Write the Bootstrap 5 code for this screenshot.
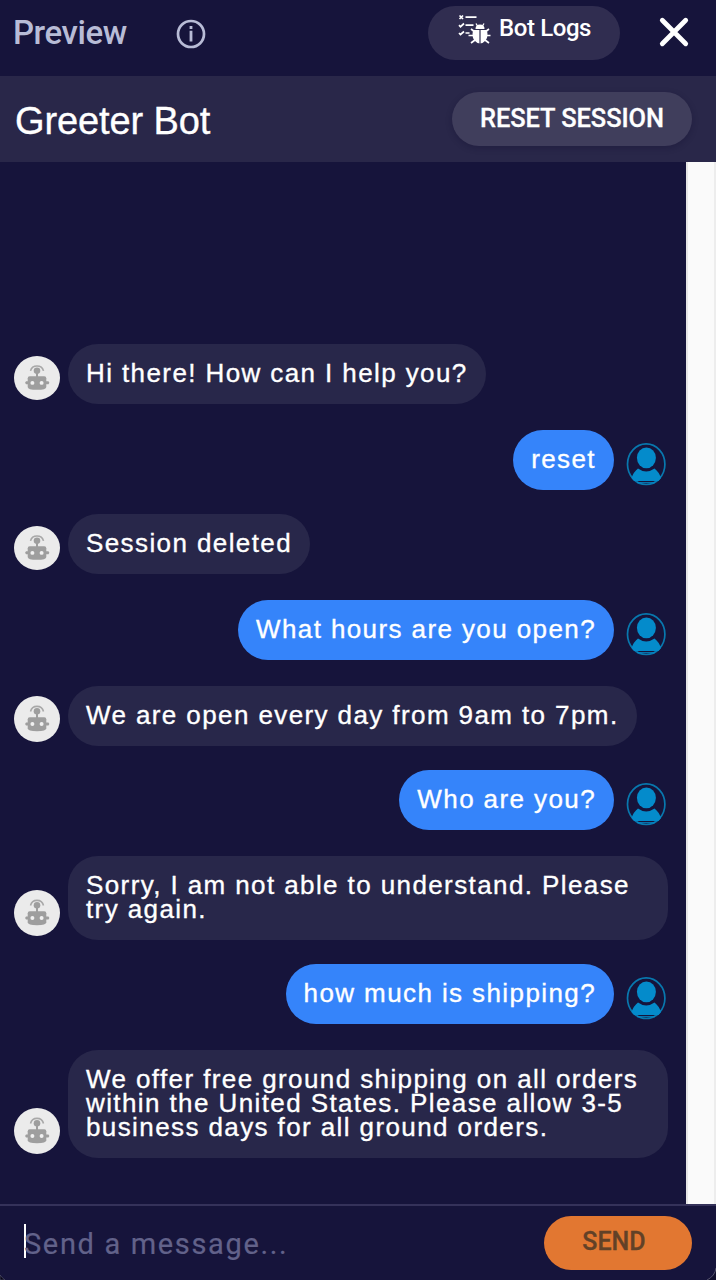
<!DOCTYPE html>
<html lang="en">
<head>
<meta charset="utf-8">
<meta name="viewport" content="width=device-width, initial-scale=1">
<title>Greeter Bot preview</title>
<link rel="stylesheet" href="https://cdn.jsdelivr.net/npm/bootstrap@5.3.0/dist/css/bootstrap.min.css">
<style>
body{background:#16143b;color:#fff;font-family:"Liberation Sans",Arial,sans-serif;height:1280px;overflow:hidden}
.ui-font{font-family:Roboto,sans-serif}
.top-bar{height:76px}
.preview-title{color:#b8bcd6;font-size:33px;font-weight:500;line-height:40px;margin:13px 0 0 13px;width:162px;letter-spacing:-.45px}
.info-icon{margin-top:18px}
.pill{border:0;border-radius:27px;height:54px;color:#fff;padding:0;white-space:nowrap}
.logs-btn{background:#302d50;width:192px;margin-top:6px;font-size:24px;font-weight:500;line-height:28px;padding:8px 0 0 29px;letter-spacing:-.4px}
.close-btn{background:none;border:0;padding:0;margin:16px 26px 0 38px;width:32px;height:32px}
.bot-bar{height:86px;background:#292749;padding:0 24px 0 15px}
.bot-name{font-size:38px;line-height:44px;margin:4px 0 0;letter-spacing:-.1px;-webkit-text-stroke:.35px #fff}
.reset-btn{background:#403e5c;width:240px;font-size:25.4px;font-weight:500;line-height:30px;padding-bottom:3px;letter-spacing:-.05px;-webkit-text-stroke:.3px #fff;box-shadow:0 2px 6px rgba(15,12,45,.3)}
.chat-log{padding:182px 0 0 14px}
.scroll-track{width:30px;background:#fafafa;border-left:2px solid #e6e6e6;border-right:2px solid #ededed}
.msg{margin-bottom:26px}
.msg.tight{margin-bottom:24px}
.bubble{background:#28274a;border-radius:30px;padding:17px 18px 19px;font-size:26px;line-height:24px;letter-spacing:1.4px;white-space:nowrap;min-height:60px;-webkit-text-stroke:.35px #fff}
.bubble.wide{width:600px}
.bot-pic{width:46px;height:46px;margin:0 8px 4px 0;flex:none}
.bot-pic.short{height:44px}
.mine{padding-right:20px}
.mine .bubble{background:#3584fa}
.user-pic{width:40px;height:44px;margin:0 0 4px 12px;flex:none}
.composer{height:76px;border-top:2px solid #35325a;padding:0 24px}
.caret{width:2px;height:34px;background:#fff;margin-top:-4px}
.hint{color:#62628a;font-size:29px;line-height:34px;letter-spacing:1.65px;margin:2px 0 0 -2px;-webkit-text-stroke:.2px #62628a}
.send-btn{background:#e27731;color:#624127;width:148px;font-size:25px;font-weight:500;line-height:30px;padding:0 8px 3px 0;-webkit-text-stroke:.3px #624127}
.corner{bottom:0;width:12px;height:12px;pointer-events:none}
</style>
</head>
<body class="d-flex flex-column position-relative">
<svg class="d-none">
  <symbol id="bot" viewBox="0 0 46 46" preserveAspectRatio="none"><circle cx="23" cy="23" r="23" fill="#ebebeb"/><g fill="#9e9e9e"><circle cx="23" cy="15.3" r="3.3"/><path d="M22 17h2v6h-2z"/><path d="M13.700 23.300q0-2 2-2h14.600q2 0 2 2v9q0 3-9.300 3t-9.300-3z"/><path d="M12 26.400h3v3.200h-3q-1.800-1.600 0-3.200zM31.500 26.400h3q1.800 1.600 0 3.200h-3z"/></g><path d="M16.500 15.500a6.700 6.700 0 0 1 13 0" fill="none" stroke="#a8a8a8" stroke-width="1.600"/><circle cx="18.400" cy="28.100" r="2" fill="#f0f0f0"/><circle cx="27.600" cy="28.100" r="2" fill="#f0f0f0"/></symbol>
  <symbol id="user" viewBox="0 0 40 44"><ellipse cx="20.200" cy="22.200" rx="18.700" ry="20.300" fill="none" stroke="#0878ae" stroke-width="1.700"/><g fill="#048bcb"><ellipse cx="20.400" cy="15.800" rx="9.500" ry="10.400"/><path d="M5.500 36q2-6 6.500-9.500 8.200 6 16.500 0 4.500 3.500 6.500 9.500l-2.500 3H8z"/><path d="M11 40.200h18v1H11z"/></g></symbol>
</svg>

<header class="top-bar ui-font d-flex align-items-start">
  <div class="preview-title">Preview</div>
  <svg class="info-icon" width="32" height="32" viewBox="0 0 32 32" fill="none" stroke="#b8bcd6"><circle cx="16" cy="16" r="13" stroke-width="2.7"/><path d="M16 12.800v10.700M16 8v3" stroke-width="2.8"/></svg>
  <button class="pill logs-btn d-flex align-items-start ms-auto" type="button">
    <svg width="34" height="32" viewBox="0 0 34 32" fill="none" stroke="#fff"><path d="m2.500 1.500 3.500 3.500m0-3.500-3.500 3.500M8.500 3.200h11M2 11.200l1.500 1.500L7 9.500M8.500 11.200h8M2 19l1.500 1.500L7 17.500M8.500 19h4" stroke-width="1.700"/><path d="m14 15 4 3m10 0 4-3M11.500 21.500h6m11 0h5M14 29l4-3m10 0 4 3" stroke-width="1.700"/><path d="M18.500 15q0-4.500 4.500-4.500t4.500 4.500z" fill="#fff" stroke="none"/><path d="m20.500 12-1.500-2.500m6.500 2.500 1.500-2.500" stroke-width="1.300"/><path d="M16 16h14q1.500 8-2 11-5 5-10 0-3.500-3-2-11z" fill="#fff" stroke="none"/><path d="M23 16v14" stroke="#302d50" stroke-width="1.200"/></svg>
    <span class="ps-2">Bot Logs</span>
  </button>
  <button class="close-btn" type="button" aria-label="Close"><svg class="d-block" width="32" height="32" viewBox="0 0 32 32"><path d="m4.300 4.300 23.400 23.400M27.700 4.300 4.300 27.700" stroke="#fff" stroke-width="4.800" stroke-linecap="round"/></svg></button>
</header>

<section class="bot-bar d-flex align-items-center justify-content-between">
  <h1 class="bot-name fw-normal">Greeter Bot</h1>
  <button class="pill reset-btn ui-font" type="button">RESET SESSION</button>
</section>

<main class="d-flex flex-grow-1 overflow-hidden">
  <div class="chat-log flex-grow-1">
    <div class="msg d-flex align-items-end"><svg class="bot-pic short"><use href="#bot"/></svg><div class="bubble">Hi there! How can I help you?</div></div>
    <div class="msg tight mine d-flex align-items-end justify-content-end"><div class="bubble">reset</div><svg class="user-pic"><use href="#user"/></svg></div>
    <div class="msg d-flex align-items-end"><svg class="bot-pic short"><use href="#bot"/></svg><div class="bubble">Session deleted</div></div>
    <div class="msg mine d-flex align-items-end justify-content-end"><div class="bubble">What hours are you open?</div><svg class="user-pic"><use href="#user"/></svg></div>
    <div class="msg tight d-flex align-items-end"><svg class="bot-pic"><use href="#bot"/></svg><div class="bubble">We are open every day from 9am to 7pm.</div></div>
    <div class="msg mine d-flex align-items-end justify-content-end"><div class="bubble">Who are you?</div><svg class="user-pic"><use href="#user"/></svg></div>
    <div class="msg tight d-flex align-items-end"><svg class="bot-pic"><use href="#bot"/></svg><div class="bubble wide">Sorry, I am not able to understand. Please<br>try again.</div></div>
    <div class="msg mine d-flex align-items-end justify-content-end"><div class="bubble">how much is shipping?</div><svg class="user-pic"><use href="#user"/></svg></div>
    <div class="msg d-flex align-items-end"><svg class="bot-pic"><use href="#bot"/></svg><div class="bubble wide">We offer free ground shipping on all orders<br>within the United States. Please allow 3-5<br>business days for all ground orders.</div></div>
  </div>
  <div class="scroll-track"></div>
</main>

<footer class="composer ui-font d-flex align-items-center">
  <div class="caret"></div>
  <div class="hint">Send a message...</div>
  <button class="pill send-btn ms-auto" type="button">SEND</button>
</footer>
<svg class="corner position-absolute start-0" viewBox="0 0 12 12"><path d="M0 7q2 3 5 5H0z" fill="#050414" stroke="#55536d" stroke-width=".7"/></svg>
<svg class="corner position-absolute end-0" viewBox="0 0 12 12"><path d="M12 0q-1 8-9 12h9z" fill="#100e2c"/><path d="M12 0q-1 8-9 12" fill="none" stroke="#55536d"/></svg>
<script src="https://cdn.jsdelivr.net/npm/bootstrap@5.3.0/dist/js/bootstrap.bundle.min.js"></script>
</body>
</html>
